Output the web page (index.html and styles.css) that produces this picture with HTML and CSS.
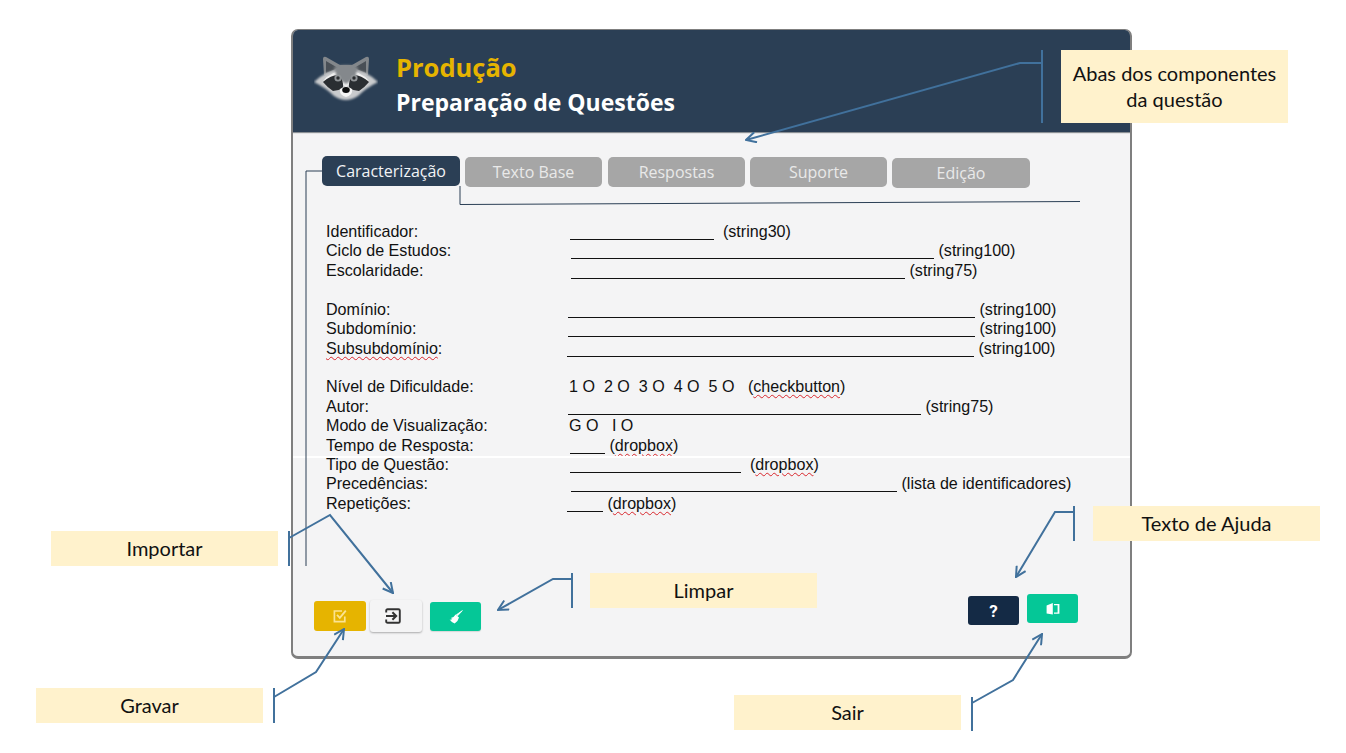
FILE: index.html
```html
<!DOCTYPE html>
<html lang="pt">
<head>
	<meta charset="utf-8">
	<title>Produção - Preparação de Questões</title>
	<link rel="stylesheet" href="styles.css">
</head>
<body>
<div class="window">
	<div class="head">
		<svg class="logo" viewBox="0 0 64 50" aria-hidden="true">
			<defs>
				<filter id="soft"><feGaussianBlur stdDeviation="1.1"/></filter>
				<filter id="soft2"><feGaussianBlur stdDeviation="0.5"/></filter>
			</defs>
			<path d="M10 22 L9 6 Q9 3 12 4 L26 12 L38 12 L52 4 Q55 3 55 6 L54 22 Z" fill="#83878b" filter="url(#soft2)"/>
			<path d="M12 20 L12 8 L24 15 Z M52 20 L52 8 L40 15 Z" fill="#4a5056" filter="url(#soft2)"/>
			<path d="M0 29 Q12 17 32 15 Q52 17 64 29 Q52 35 44 43 Q38 47 32 47 Q26 47 20 43 Q12 35 0 29 Z" fill="#c9cbcd" filter="url(#soft)"/>
			<path d="M9 28 Q17 18 32 17 Q47 18 55 28 Q47 24 40 28 L32 34 L24 28 Q17 24 9 28 Z" fill="#f0f0f0" filter="url(#soft2)"/>
			<path d="M20 14 Q32 10 44 14 L41 25 L32 31 L23 25 Z" fill="#84888c" filter="url(#soft)"/>
			<path d="M9 29 Q17 22 24 22 Q30 27 29 35 Q24 38 19 38 Q13 34 9 29 Z M55 29 Q47 22 40 22 Q34 27 35 35 Q40 38 45 38 Q51 34 55 29 Z" fill="#2a2d30" filter="url(#soft2)"/>
			<circle cx="24" cy="25" r="3.6" fill="#8f9396" filter="url(#soft2)"/>
			<circle cx="40" cy="25" r="3.6" fill="#8f9396" filter="url(#soft2)"/>
			<circle cx="24" cy="25" r="1.7" fill="#2b2e31"/>
			<circle cx="40" cy="25" r="1.7" fill="#2b2e31"/>
			<path d="M26 36 Q32 31 38 36 Q39 42 32 44 Q25 42 26 36 Z" fill="#f4f4f4" filter="url(#soft2)"/>
			<ellipse cx="32" cy="37" rx="3.8" ry="2.9" fill="#0c0d0e"/>
		</svg>
		<div class="titles">
			<div class="title-main">Produção</div>
			<div class="title-sub">Preparação de Questões</div>
		</div>
	</div>

	<div class="tabs">
		<span class="tab current">Caracterização</span>
		<span class="tab">Texto Base</span>
		<span class="tab">Respostas</span>
		<span class="tab">Suporte</span>
		<span class="tab">Edição</span>
	</div>

	<div class="form">
		<div class="group">
			<div class="row"><span>Identificador:</span><span class="val"><i class="blank f-id"></i>  (string30)</span></div>
			<div class="row"><span>Ciclo de Estudos:</span><span class="val"><i class="blank f-ciclo"></i> (string100)</span></div>
			<div class="row"><span>Escolaridade:</span><span class="val"><i class="blank f-esc"></i> (string75)</span></div>
		</div>
		<div class="group">
			<div class="row"><span>Domínio:</span><span class="val"><i class="blank f-dom"></i> (string100)</span></div>
			<div class="row"><span>Subdomínio:</span><span class="val"><i class="blank f-sub"></i> (string100)</span></div>
			<div class="row"><span><span class="typo">Subsubdomínio</span>:</span><span class="val"><i class="blank f-subsub"></i> (string100)</span></div>
		</div>
		<div class="group">
			<div class="row"><span>Nível de Dificuldade:</span><span class="val opts">1 O  2 O  3 O  4 O  5 O   (<span class="typo">checkbutton</span>)</span></div>
			<div class="row"><span>Autor:</span><span class="val"><i class="blank f-autor"></i> (string75)</span></div>
			<div class="row"><span>Modo de Visualização:</span><span class="val opts">G O   I O</span></div>
			<div class="row"><span>Tempo de Resposta:</span><span class="val"><i class="blank f-tempo"></i> (<span class="typo">dropbox</span>)</span></div>
			<div class="row"><span>Tipo de Questão:</span><span class="val"><i class="blank f-tipo"></i>  (<span class="typo">dropbox</span>)</span></div>
			<div class="row"><span>Precedências:</span><span class="val"><i class="blank f-prec"></i> (lista de identificadores)</span></div>
			<div class="row"><span>Repetições:</span><span class="val"><i class="blank f-rep"></i> (<span class="typo">dropbox</span>)</span></div>
		</div>
	</div>

	<div class="actions">
		<div class="btns">
			<button class="btn save">
				<svg viewBox="0 0 14 14" width="14" height="14"><path d="M11.8 7.5V12.6H1.4V2H9" fill="none" stroke="#fbe392" stroke-width="1.7"/><path d="M4 5.8L6.8 8.8L12.8 1.6" fill="none" stroke="#fbe392" stroke-width="1.8"/></svg>
			</button>
			<button class="btn import">
				<svg viewBox="0 0 16 16" width="16" height="16"><path d="M1.2 4.5V2.6Q1.2 1.2 2.6 1.2H13.4Q14.8 1.2 14.8 2.6V13.4Q14.8 14.8 13.4 14.8H2.6Q1.2 14.8 1.2 13.4V11.5" fill="none" stroke="#333" stroke-width="1.9"/><path d="M1 8H10.5" stroke="#333" stroke-width="2"/><path d="M7.4 4.2L11.2 8L7.4 11.8" fill="none" stroke="#333" stroke-width="2"/></svg>
			</button>
			<button class="btn clean">
				<svg viewBox="0 0 14 14" width="14" height="14"><path d="M13.4 0.6L8.6 5.8L7.4 4.8Z" fill="#fff" stroke="#fff" stroke-width="0.8"/><path d="M6.6 4.4L10 7.6Q9.4 11 5.6 13.4Q2.4 12.4 0.6 9.6Q2.4 9.8 3.4 8.8Q2.4 8.8 1.8 8Q4.8 7.6 6.6 4.4Z" fill="#fff"/></svg>
			</button>
		</div>
		<div class="btns right">
			<button class="btn help">?</button>
			<button class="btn leave">
				<svg viewBox="0 0 14 13" width="14" height="13"><path d="M0.6 3.6L6.8 1V12.6L0.6 11.4Z" fill="#fff"/><path d="M8 2H13.4V11.8H8V10.6H11.6V3.2H8Z" fill="#fff"/></svg>
			</button>
		</div>
	</div>
	<div class="seam"></div>
</div>

<div class="note note-abas">Abas dos componentes<br>da questão</div>
<div class="note note-ajuda">Texto de Ajuda</div>
<div class="note note-importar">Importar</div>
<div class="note note-limpar">Limpar</div>
<div class="note note-gravar">Gravar</div>
<div class="note note-sair">Sair</div>

<svg class="wires" width="1346" height="753" aria-hidden="true">
	<defs>
		<marker id="tip" viewBox="0 0 12 12" refX="11" refY="6" markerWidth="12" markerHeight="12" markerUnits="userSpaceOnUse" orient="auto">
			<path d="M1 0.8L11 6L1 11.2" fill="none" stroke="#41719c" stroke-width="2"/>
		</marker>
	</defs>
	<g class="thin">
		<path d="M322 171H306V566"/>
		<path d="M460 186V204.500L1080 201.500"/>
	</g>
	<g class="wire">
		<path d="M1042 50V123"/>
		<path d="M1042 63H1020L746 140" marker-end="url(#tip)"/>
		<path d="M289 531V566"/>
		<path d="M289 538L330 515L393 593" marker-end="url(#tip)"/>
		<path d="M274 688V723"/>
		<path d="M274 697L316 672L344 629" marker-end="url(#tip)"/>
		<path d="M572 573V608"/>
		<path d="M572 579H553L498 610" marker-end="url(#tip)"/>
		<path d="M1074 506V541"/>
		<path d="M1074 512H1055L1016 577" marker-end="url(#tip)"/>
		<path d="M972 697V731"/>
		<path d="M972 703L1013 680L1042 634" marker-end="url(#tip)"/>
	</g>
</svg>
</body>
</html>
```

FILE: styles.css
```css
* {
	margin: 0;
	padding: 0;
	box-sizing: border-box;
}
body {
	position: relative;
	width: 1346px;
	height: 753px;
	overflow: hidden;
	background: #fff;
	font-family: "Liberation Sans", Arial, sans-serif;
	color: #111;
}

/* janela */
.window {
	position: relative;
	display: flex;
	flex-direction: column;
	width: 841px;
	height: 630px;
	margin: 29px 0 0 291px;
	background: #f4f4f5;
	border: solid #7f7f7f;
	border-width: 1px 2px 3px 2px;
	border-radius: 7px;
	overflow: hidden;
}
.head {
	display: flex;
	align-items: center;
	flex: none;
	height: 102px;
	padding: 8px 0 0 21px;
	background: #2b3f55;
	box-shadow: 0 1px 1px #8a8f94;
}
.logo {
	width: 64px;
	height: 50px;
	flex: none;
	margin-bottom: 14px;
}
.titles {
	margin-left: 18px;
	margin-top: -2px;
	font-family: "Open Sans", "Noto Sans", sans-serif;
	font-weight: 700;
}
.title-main {
	font-size: 25.500px;
	line-height: 36px;
	color: #e6b400;
}
.title-sub {
	font-size: 23px;
	line-height: 34px;
	color: #fff;
}

/* abas */
.tabs {
	display: flex;
	flex: none;
	gap: 5px;
	height: 32px;
	margin: 24px 0 0 29px;
	font-family: "Open Sans", "Noto Sans", sans-serif;
	font-size: 16px;
}
.tab {
	width: 137px;
	height: 30px;
	margin-top: 1px;
	border-radius: 5px;
	background: #a6a6a6;
	color: #e9e9e9;
	text-align: center;
	line-height: 30px;
}
.tab:nth-child(3) {
	margin-left: 1px;
}
.tab:last-child {
	width: 138px;
	margin-top: 2px;
}
.tab.current {
	width: 138px;
	margin-top: 0;
	background: #2b3f55;
	color: #f1f3f5;
}

/* campos */
.form {
	flex: none;
	margin: 34px 0 0 33px;
	font-size: 16.1px;
	line-height: 19.42px;
}
.group {
	margin-bottom: 19.4px;
}
.row {
	display: grid;
	grid-template-columns: 242px 1fr;
	white-space: pre;
}
.blank {
	display: inline-block;
	height: 1px;
	background: #111;
	vertical-align: -3px;
}
.opts {
	margin-left: 1px;
}
.typo {
	text-decoration: underline wavy #d8262c 1px;
	text-underline-offset: 2px;
}
.f-id { width: 144px; margin-left: 2px; }
.f-ciclo { width: 363px; margin-left: 3px; }
.f-esc { width: 334px; margin-left: 3px; }
.f-dom { width: 407px; }
.f-sub { width: 407px; }
.f-subsub { width: 407px; margin-left: -1px; }
.f-autor { width: 353px; }
.f-tempo { width: 35px; margin-left: 2px; }
.f-tipo { width: 171px; margin-left: 2px; }
.f-prec { width: 326px; margin-left: 3px; }
.f-rep { width: 36px; margin-left: -1px; }

/* botoes */
.actions {
	display: flex;
	justify-content: space-between;
	align-items: flex-end;
	margin-top: auto;
	padding: 0 52px 24px 21px;
}
.btns {
	display: flex;
	align-items: center;
}
.btns.right {
	align-items: flex-start;
	margin-bottom: 7px;
}
.btn {
	display: flex;
	align-items: center;
	justify-content: center;
	width: 52px;
	height: 30px;
	border: none;
	border-radius: 3px;
	font-family: "Roboto", "Liberation Sans", sans-serif;
}
.save {
	background: #e6b400;
}
.import {
	height: 32px;
	margin: 0 8px 0 4px;
	padding-right: 6px;
	background: #f4f4f5;
	box-shadow: 0 1px 2px rgba(0, 0, 0, .3);
}
.clean {
	width: 51px;
	height: 29px;
	margin-top: 1px;
	background: #05c797;
	box-shadow: 0 1px 1px rgba(0, 0, 0, .12);
}
.help {
	width: 51px;
	height: 29px;
	margin: 2px 8px 0 0;
	background: #142a45;
	color: #fff;
	font-size: 17px;
	font-weight: 700;
}
.leave {
	width: 51px;
	height: 29px;
	background: #05c797;
}
.seam {
	position: absolute;
	left: -2px;
	right: -2px;
	top: 426px;
	height: 2px;
	background: #fff;
}

/* anotacoes */
.note {
	position: absolute;
	display: flex;
	align-items: center;
	justify-content: center;
	width: 227px;
	height: 35px;
	padding-bottom: 2px;
	background: #fff2cc;
	color: #111;
	font-family: "Lato", "Open Sans", sans-serif;
	font-size: 20px;
	line-height: 26px;
	text-align: center;
}
.note-abas { left: 1061px; top: 50px; height: 73px; }
.note-ajuda { left: 1093px; top: 506px; }
.note-importar { left: 51px; top: 531px; }
.note-limpar { left: 590px; top: 573px; }
.note-gravar { left: 36px; top: 688px; }
.note-sair { left: 734px; top: 695px; }
.wires {
	position: absolute;
	left: 0;
	top: 0;
	pointer-events: none;
}
.wire path {
	fill: none;
	stroke: #41719c;
	stroke-width: 2;
}
.thin path {
	fill: none;
	stroke: #2b3f55;
	stroke-width: 1;
}
```
